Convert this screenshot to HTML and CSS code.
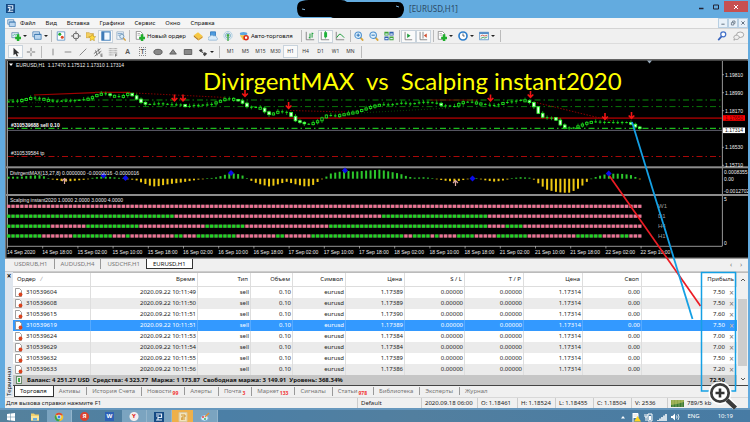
FILE: index.html
```html
<!DOCTYPE html>
<html lang="ru">
<head>
<meta charset="utf-8">
<meta name="viewport" content="width=device-width, initial-scale=1">
<title>[EURUSD,H1]</title>
<link rel="stylesheet" href="styles.css">
</head>
<body>
<svg class="defs" aria-hidden="true">
  <symbol id="newchart" viewBox="0 0 12 12"><path d="M1 2h8v6H1z" fill="#dfeaf5" stroke="#6b8fb3"/><path d="M2 6l2-2 2 1 2-2" fill="none" stroke="#4b8"/><path d="M7 4h3v3h2v3h-2v2H7v-2H5V7h2z" fill="#1fae2b"/></symbol>
  <symbol id="profiles" viewBox="0 0 12 12"><path d="M1 1h8v6H1z" fill="#d7e8f8" stroke="#4f86b8"/><path d="M3 4h8v6H3z" fill="#b9d6f0" stroke="#4f86b8"/><path d="M3 4h8" stroke="#2f6ea8"/></symbol>
  <symbol id="market" viewBox="0 0 12 12"><path d="M1.500 1h9v10h-9z" fill="#fff" stroke="#5d92c4"/><circle cx="4.500" cy="4" r="1.800" fill="#1faa33"/><circle cx="7.500" cy="7.500" r="1.800" fill="#dc4b28"/></symbol>
  <symbol id="target" viewBox="0 0 12 12"><circle cx="6" cy="6" r="3.500" fill="none" stroke="#666" stroke-width="1.200"/><path d="M6 0v4M6 8v4M0 6h4M8 6h4" stroke="#666"/></symbol>
  <symbol id="starfolder" viewBox="0 0 12 12"><path d="M0 2h4l1 1h4v5H0z" fill="#f3cf62" stroke="#c4993b" stroke-width=".7"/><path d="M7.500 4l1.300 2.500 2.900.3-2.100 2 .5 2.900-2.600-1.400-2.600 1.400.5-2.900-2.100-2 2.900-.3z" fill="#ffd93c" stroke="#b98f1c" stroke-width=".6"/></symbol>
  <symbol id="panel" viewBox="0 0 12 12"><path d="M1 1h10v10H1z" fill="#f2f8fe" stroke="#4c87c0" stroke-width="1.300"/><path d="M1 1h3v10H1z" fill="#3f7ab6"/></symbol>
  <symbol id="tester" viewBox="0 0 12 12"><path d="M1 1h8v9H1z" fill="#eef4fa" stroke="#9fb3c8"/><path d="M2 3h6M2 5h3" stroke="#77a0c6"/><circle cx="7" cy="6.500" r="2.500" fill="#d9ecfa" stroke="#6a8fae"/><path d="M9 8.500l2.500 3" stroke="#d39d34" stroke-width="1.600"/></symbol>
  <symbol id="order" viewBox="0 0 12 12"><path d="M1.500.5h5l2.500 2.500v7H1.500z" fill="#fff" stroke="#888"/><path d="M3 3h3M3 5h4" stroke="#aaa"/><path d="M7 4h3v3h2v3h-2v2H7v-2H5V7h2z" fill="#1fae2b"/></symbol>
  <symbol id="gold" viewBox="0 0 12 12"><path d="M1 5l5-3.500L11.500 6 6.500 9.500z" fill="#f7c843"/><path d="M1 5v2l5.500 4.500v-2z" fill="#b87a14"/><path d="M6.500 9.500L11.500 6v2l-5 3.500z" fill="#d89a24"/></symbol>
  <symbol id="cloud" viewBox="0 0 12 12"><path d="M3 1h6v5H3z" fill="#4c9be0" stroke="#2f78bd"/><path d="M2 11a2 2 0 010-4 3 3 0 015-1 2.500 2.500 0 013.500 2A1.600 1.600 0 0110 11z" fill="#d9ecfb" stroke="#7fa9cd" stroke-width=".8"/></symbol>
  <symbol id="signal" viewBox="0 0 12 12"><circle cx="6" cy="5.500" r="5" fill="none" stroke="#b2d2e4" stroke-width="1.200"/><circle cx="6" cy="5.500" r="3" fill="none" stroke="#79b0cc" stroke-width="1.200"/><circle cx="6" cy="5" r="1.500" fill="#3fa945"/><path d="M6 5v7" stroke="#3fa945" stroke-width="1.600"/></symbol>
  <symbol id="auto" viewBox="0 0 12 12"><ellipse cx="5.500" cy="3.200" rx="4.500" ry="2" fill="#5ba5df"/><path d="M1 5h9l-1 5-4 1z" fill="#f1c443"/><circle cx="8.500" cy="8" r="3.300" fill="#d92a1c"/><path d="M7.200 6.700h2.600v2.600H7.200z" fill="#fff"/></symbol>
  <symbol id="bars" viewBox="0 0 12 12"><path d="M1.500 1v9.500H11" fill="none" stroke="#777"/><path d="M6 3v6M4.500 8H6M8.500 2v6M8.500 3H10" fill="none" stroke="#1d9d3a" stroke-width="1.200"/></symbol>
  <symbol id="candle" viewBox="0 0 12 12"><path d="M1.500 1v9.500H11" fill="none" stroke="#777"/><path d="M6.500 0v9" stroke="#1d9d3a"/><path d="M5 1.500h3.500v6H5z" fill="#1db33a"/></symbol>
  <symbol id="line" viewBox="0 0 12 12"><path d="M1.500 1v9.500H11" fill="none" stroke="#777"/><path d="M2 8l3-4 2 0 4 4" fill="none" stroke="#1d9d3a" stroke-width="1.200"/></symbol>
  <symbol id="zoomin" viewBox="0 0 12 12"><path d="M7.500 7.500l3.500 4" stroke="#d9a63b" stroke-width="2.200"/><circle cx="5" cy="5" r="3.900" fill="#ddf0fc" stroke="#4b8fce" stroke-width="1.300"/><path d="M5 3v4M3 5h4" stroke="#2f74b8" stroke-width="1.200"/></symbol>
  <symbol id="zoomout" viewBox="0 0 12 12"><path d="M7.500 7.500l3.500 4" stroke="#d9a63b" stroke-width="2.200"/><circle cx="5" cy="5" r="3.900" fill="#ddf0fc" stroke="#4b8fce" stroke-width="1.300"/><path d="M3 5h4" stroke="#2f74b8" stroke-width="1.200"/></symbol>
  <symbol id="tile" viewBox="0 0 12 12"><path d="M.5 1h5v4.500h-5zM6.500 6.500h5V11h-5z" fill="#3fa33b"/><path d="M6.500 1h5v4.500h-5zM.5 6.500h5V11h-5z" fill="#2e5fae"/><path d="M1.500 3h3v1.500h-3zM7.500 3h3v1.500h-3zM1.500 8.500h3V10h-3zM7.500 8.500h3V10h-3z" fill="#dfeefb"/></symbol>
  <symbol id="scroll" viewBox="0 0 12 12"><path d="M2.500 1v9.500H11" fill="none" stroke="#777"/><path d="M5 3l4 2.700L5 8.500z" fill="#1d9d3a"/></symbol>
  <symbol id="shift" viewBox="0 0 12 12"><path d="M2.500 1v9.500H11M6 1v8" fill="none" stroke="#777"/><path d="M10.500 3L7 5.500l3.500 2.500z" fill="#d14b2b"/></symbol>
  <symbol id="clock" viewBox="0 0 12 12"><circle cx="6" cy="6" r="4.800" fill="#fff" stroke="#2e7ecb" stroke-width="2"/><path d="M6 3v3h2" fill="none" stroke="#345"/></symbol>
  <symbol id="template" viewBox="0 0 12 12"><path d="M.5 1.500h11v9H.5z" fill="#eaf4fd" stroke="#5b93c8"/><path d="M.5 2.500h11" stroke="#4785c2" stroke-width="2"/><path d="M2 6l2-1 3 1 3-1" fill="none" stroke="#d2553c"/><path d="M2 9l3-1.500 2 1 3-1.500" fill="none" stroke="#3b9e4a"/></symbol>
  <symbol id="search" viewBox="0 0 12 12"><circle cx="7.500" cy="4" r="3" fill="#fff" stroke="#4271c9" stroke-width="1.500"/><path d="M5.500 6.500L1.500 11" stroke="#3663bd" stroke-width="2"/></symbol>
  <symbol id="chat" viewBox="0 0 14 12"><ellipse cx="9" cy="4.500" rx="4.300" ry="3.300" fill="#f5f5f5" stroke="#999"/><path d="M4.500 5a3.200 2.600 0 11-1 5L1.500 11l.5-2A3 2.500 0 014.500 5z" fill="#eee" stroke="#999"/></symbol>
  <symbol id="cursor" viewBox="0 0 12 12"><path d="M3 1v9l2.300-2L7 11.500l1.500-.8L7 7.500h3z" fill="#333"/></symbol>
  <symbol id="cross" viewBox="0 0 12 12"><path d="M6 1v4M6 7v4M1 6h4M7 6h4" stroke="#666"/></symbol>
  <symbol id="vline" viewBox="0 0 12 12"><path d="M6 2v8" stroke="#777"/></symbol>
  <symbol id="hline" viewBox="0 0 12 12"><path d="M2 6h8" stroke="#777"/></symbol>
  <symbol id="trend" viewBox="0 0 12 12"><path d="M2 10l8-8" stroke="#777"/></symbol>
  <symbol id="channel" viewBox="0 0 12 12"><path d="M1 8l8-6M2 11l8-6M3 4l2 6M6 2l2 6" stroke="#666"/><path d="M11.500 8.500h-2v3h2M9.500 10h2" fill="none" stroke="#555" stroke-width=".7"/></symbol>
  <symbol id="fib" viewBox="0 0 12 12"><path d="M1 2h10M1 4.500h10M1 7h10M1 9.500h6" stroke="#888" stroke-dasharray="1 .5"/><path d="M9 11.500V8.500h2M9 10h2" fill="none" stroke="#555" stroke-width=".7"/></symbol>
  <symbol id="ellipse" viewBox="0 0 12 12"><ellipse cx="6" cy="6" rx="5" ry="3.200" fill="#888" stroke="#555"/></symbol>
  <symbol id="tri" viewBox="0 0 12 12"><path d="M6 3l4 5.500H2z" fill="#888" stroke="#555"/></symbol>
  <symbol id="rect" viewBox="0 0 12 12"><path d="M1.500 3h9v6h-9z" fill="#888" stroke="#555"/></symbol>
  <symbol id="arrows" viewBox="0 0 12 12"><path d="M1 4l3-2 2 3-3 1zM6 9l2-3 3 2-3 3z" fill="#444"/><path d="M3 5l6 4" stroke="#444"/></symbol>
  <symbol id="doc" viewBox="0 0 8 9"><path d="M.5.5h4l2 2v6h-6z" fill="#fff" stroke="#888" stroke-width=".8"/><circle cx="5.500" cy="6.500" r="1.900" fill="#d9431e"/></symbol>
  <symbol id="mt" viewBox="0 0 10 10"><path d="M0 0h10v10H0z" fill="#154a84"/><path d="M2 2h5.500v3.500H4V8M2 4h3M2 8h6" fill="none" stroke="#e3eef9" stroke-width="1.200"/></symbol>
</svg>
<div class="desktop">
  <div class="window">
    <header class="titlebar">
      <svg class="applogo"><use href="#mt"/></svg>
      <div class="caption">
        <svg class="redaction" viewBox="0 0 108 18"><path d="M5 1Q0 2 0 8Q0 17 6 17H34Q36 18.500 42 18H100Q106 17 107 10Q107 2 101 2H50Q48 0 44 0H12Q8 0 5 1z"/><path d="M5 9l3 .7M99 6l3 1" stroke="#7fb4dc"/></svg>
        <h1>[EURUSD,H1]</h1>
      </div>
      <div class="winbtns">
        <button aria-label="Свернуть"><svg viewBox="0 0 10 8"><path d="M3 5.500h4.500" stroke="#223" stroke-width="1.500"/></svg></button>
        <button aria-label="Развернуть"><svg viewBox="0 0 10 8"><path d="M2.500 2h5v4h-5z" fill="none" stroke="#223"/></svg></button>
        <button class="close" aria-label="Закрыть"><svg viewBox="0 0 10 8"><path d="M3 2l4 4M7 2L3 6" stroke="#fff"/></svg></button>
      </div>
    </header>
    <main class="client">
      <nav class="menu">
        <svg class="menuicon"><use href="#profiles"/></svg>
        <a href="#f">Файл</a><a href="#v">Вид</a><a href="#i">Вставка</a><a href="#g">Графики</a><a href="#s">Сервис</a><a href="#w">Окно</a><a href="#h">Справка</a>
        <div class="mdi">
          <button aria-label="Свернуть окно"><svg viewBox="0 0 10 8"><path d="M3 5.500h4" stroke="#456"/></svg></button>
          <button aria-label="Восстановить"><svg viewBox="0 0 10 8"><path d="M3 3.500h3v3H3zM4.500 3V1.500h3v3H6.500" fill="none" stroke="#456" stroke-width=".8"/></svg></button>
          <button aria-label="Закрыть окно"><svg viewBox="0 0 10 8"><path d="M3 2l4 4M7 2L3 6" stroke="#456"/></svg></button>
        </div>
      </nav>
      <div class="toolbar">
        <button class="drop" aria-label="Новый график"><svg><use href="#newchart"/></svg></button>
        <button class="drop" aria-label="Профили"><svg><use href="#profiles"/></svg></button>
        <i class="sep"></i>
        <button aria-label="Обзор рынка"><svg><use href="#market"/></svg></button>
        <button aria-label="Окно данных"><svg><use href="#target"/></svg></button>
        <button aria-label="Навигатор"><svg><use href="#starfolder"/></svg></button>
        <button class="on" aria-label="Терминал"><svg><use href="#panel"/></svg></button>
        <button aria-label="Тестер"><svg><use href="#tester"/></svg></button>
        <i class="sep"></i>
        <button class="wide"><svg><use href="#order"/></svg>Новый ордер</button>
        <button aria-label="MetaEditor"><svg><use href="#gold"/></svg></button>
        <button aria-label="Облако"><svg><use href="#cloud"/></svg></button>
        <button aria-label="Сигналы"><svg><use href="#signal"/></svg></button>
        <button class="wide"><svg><use href="#auto"/></svg>Авто-торговля</button>
        <i class="sep far"></i>
        <button aria-label="Бары"><svg><use href="#bars"/></svg></button>
        <button class="on" aria-label="Свечи"><svg><use href="#candle"/></svg></button>
        <button aria-label="Линия"><svg><use href="#line"/></svg></button>
        <i class="sep"></i>
        <button aria-label="Увеличить"><svg><use href="#zoomin"/></svg></button>
        <button aria-label="Уменьшить"><svg><use href="#zoomout"/></svg></button>
        <button aria-label="Окна мозаикой"><svg><use href="#tile"/></svg></button>
        <i class="sep"></i>
        <button class="on" aria-label="Автопрокрутка"><svg><use href="#scroll"/></svg></button>
        <button class="on" aria-label="Сдвиг графика"><svg><use href="#shift"/></svg></button>
        <i class="sep"></i>
        <button class="drop" aria-label="Индикаторы"><svg><use href="#order"/></svg></button>
        <button class="drop" aria-label="Периоды"><svg><use href="#clock"/></svg></button>
        <button class="drop" aria-label="Шаблоны"><svg><use href="#template"/></svg></button>
        <i class="sep"></i>
        <span class="grow"></span>
        <button aria-label="Поиск"><svg><use href="#search"/></svg></button>
        <button class="chat" aria-label="Сообщения"><svg><use href="#chat"/></svg></button>
      </div>
      <div class="toolbar second">
        <button class="on" aria-label="Курсор"><svg><use href="#cursor"/></svg></button>
        <button aria-label="Перекрестие"><svg><use href="#cross"/></svg></button>
        <i class="sep"></i>
        <button aria-label="Вертикальная линия"><svg><use href="#vline"/></svg></button>
        <button aria-label="Горизонтальная линия"><svg><use href="#hline"/></svg></button>
        <button aria-label="Трендовая линия"><svg><use href="#trend"/></svg></button>
        <button aria-label="Канал"><svg><use href="#channel"/></svg></button>
        <button aria-label="Фибоначчи"><svg><use href="#fib"/></svg></button>
        <button class="letter">A</button>
        <button class="letter"><span class="boxed">T</span></button>
        <button aria-label="Эллипс"><svg><use href="#ellipse"/></svg></button>
        <button aria-label="Треугольник"><svg><use href="#tri"/></svg></button>
        <button aria-label="Прямоугольник"><svg><use href="#rect"/></svg></button>
        <button class="drop" aria-label="Стрелки"><svg><use href="#arrows"/></svg></button>
        <i class="sep"></i>
        <button>M1</button><button>M5</button><button>M15</button><button>M30</button><button class="on">H1</button><button>H4</button><button>D1</button><button>W1</button><button>MN</button>
        <i class="sep"></i>
      </div>
      <svg class="chart" id="chart" viewBox="5 59 743 200" role="img" aria-label="EURUSD,H1"></svg>
      <nav class="charttabs">
        <a href="#c1">USDRUB,H1</a><a href="#c2">AUDUSD,H4</a><a href="#c3">USDCHF,H1</a><a href="#c4" class="active">EURUSD,H1</a>
        <span class="grow"></span><button aria-label="Назад">‹</button><button aria-label="Вперёд">›</button>
      </nav>
      <section class="terminal">
        <div class="gutter"><button aria-label="Закрыть терминал">×</button><span>Терминал</span></div>
        <div class="panel">
          <div class="tablewrap">
            <table>
              <colgroup><col class="c1"><col class="c2"><col class="c3"><col class="c4"><col class="c5"><col class="c6"><col class="c7"><col class="c8"><col class="c9"><col class="c10"><col class="c11"><col class="c12"></colgroup>
              <thead><tr><th>Ордер <em>∕</em></th><th>Время</th><th>Тип</th><th>Объем</th><th>Символ</th><th>Цена</th><th>S / L</th><th>T / P</th><th>Цена</th><th>Своп</th><th class="profit" colspan="2">Прибыль</th></tr></thead>
              <tbody id="orders"></tbody>
              <tfoot><tr><td colspan="10"><i class="plus"></i>Баланс: 4 251.27 USD&nbsp; Средства: 4 323.77&nbsp; Маржа: 1 173.87&nbsp; Свободная маржа: 3 149.91&nbsp; Уровень: 368.34%</td><td>72.50</td><td></td></tr></tfoot>
            </table>
            <div class="scroll"><button aria-label="Вверх"><svg viewBox="0 0 8 8"><path d="M2 5l2-2 2 2" fill="none" stroke="#555"/></svg></button><i></i><button aria-label="Вниз"><svg viewBox="0 0 8 8"><path d="M2 3l2 2 2-2" fill="none" stroke="#555"/></svg></button></div>
          </div>
          <nav class="tabs">
            <a class="active" href="#t1">Торговля</a><a href="#t2">Активы</a><a href="#t3">История Счета</a><a href="#t4">Новости<sub>99</sub></a><a href="#t5">Алерты</a><a href="#t6">Почта<sub>3</sub></a><a href="#t7">Маркет<sub>133</sub></a><a href="#t8">Сигналы</a><a href="#t9">Статьи<sub>978</sub></a><a href="#t10">Библиотека</a><a href="#t11">Эксперты</a><a href="#t12">Журнал</a>
          </nav>
        </div>
      </section>
      <footer class="status">
        <span class="help">Для вызова справки нажмите F1</span><span class="w64">Default</span><span class="w56">2020.09.18 06:00</span><span class="w40">O: 1.18461</span><span class="w38">H: 1.18524</span><span class="w38">L: 1.18455</span><span class="w38">C: 1.18504</span><span class="w36">V: 2536</span><span class="net"><svg viewBox="0 0 13 7"><path d="M0 0h13v7H0z" fill="#3e7a34"/><path d="M0 0h13v2L6 4 0 5z" fill="#93a94a"/><path d="M2 0v7M5 0v7M8 0v7M11 0v7" stroke="#cfdc9c" stroke-width=".4"/></svg>789/5 kb</span>
      </footer>
    </main>
  </div>
  <footer class="taskbar">
    <button aria-label="Пуск"><svg viewBox="0 0 10 10"><path d="M1 2l3.500-.5v3.200H1zM5 1.400L9 1v3.700H5zM1 5.200h3.500v3.200L1 8zM5 5.200h4V9l-4-.5z" fill="#fff"/></svg></button>
    <button aria-label="Проводник"><svg viewBox="0 0 10 10"><path d="M1 1.500h3l1 1h4v6H1z" fill="#f0cf6b"/><path d="M1 4h8v4.500H1z" fill="#f9e49b"/><path d="M3 6h4v2.500H3z" fill="#69aee0"/></svg></button>
    <button class="open" aria-label="Chrome"><svg viewBox="0 0 10 10"><circle cx="5" cy="5" r="4.300" fill="#f2c32c"/><path d="M1.300 2.800A4.300 4.300 0 019 3.300H5z" fill="#de4634"/><path d="M1.300 2.800A4.300 4.300 0 005 9.300L6.500 6 3.500 6z" fill="#37a351"/><circle cx="5" cy="5" r="1.900" fill="#3f83e8" stroke="#fff" stroke-width=".7"/></svg></button>
    <button class="ya">Я</button>
    <button class="word">W</button>
    <button class="open yb">Y</button>
    <button class="open" aria-label="MetaTrader"><svg><use href="#mt"/></svg></button>
    <button class="alert" aria-label="MetaTrader 2"><svg viewBox="0 0 10 10"><path d="M1 .5h8v9H1z" fill="#f3e3ba" stroke="#d8c79f"/><path d="M3 3h4v2H4v3M3 7h4" fill="none" stroke="#d2942a"/></svg></button>
    <button class="open" aria-label="Paint"><svg viewBox="0 0 10 10"><ellipse cx="4.500" cy="6" rx="3.800" ry="3" fill="#d8eaf7" stroke="#6ba2cf" stroke-width=".7"/><circle cx="3" cy="5" r=".9" fill="#d33"/><circle cx="5" cy="7" r=".9" fill="#3a5"/><path d="M5 5l4-4" stroke="#e8902d" stroke-width="1.300"/></svg></button>
    <span class="grow"></span>
    <div class="tray">
      <svg viewBox="0 0 10 10"><path d="M3 6.500l2-2.500 2 2.500z" fill="#fff"/></svg>
      <svg viewBox="0 0 10 10"><path d="M2 1v9M2 1.500h5v4H2" fill="#eee" stroke="#fff"/><path d="M6.500 4L10 9.500H3z" fill="#ffd51f"/></svg>
      <svg viewBox="0 0 10 10"><path d="M4 2h4v7H4zM1 2v3h2V2M2 5v4" fill="none" stroke="#fff"/><path d="M5 4h2v4H5z" fill="#fff"/></svg>
      <svg viewBox="0 0 10 10"><path d="M1 9v-1M3 9V6.500M5 9V5M7 9V3.500M9 9V2" stroke="#fff" stroke-width="1.500"/></svg>
      <svg viewBox="0 0 10 10"><path d="M1 4h1.500L5 1.500v7L2.500 6H1z" fill="#fff"/><path d="M6.500 3.500q1 1.500 0 3M8 2q2 3 0 6" fill="none" stroke="#fff" stroke-width=".8"/></svg>
      <span class="lang">ENG</span><time>10:19</time>
    </div>
  </footer>
  <svg class="overlay" viewBox="0 0 750 422" aria-hidden="true">
    <path d="M609.500 176L700.500 306" stroke="#ec1c24" stroke-width="1.700"/>
    <path d="M632 122L692.500 319" stroke="#14a0e4" stroke-width="1.800"/>
    <path d="M701.500 272.500H735.500V391H701.500z" fill="none" stroke="#14a0e4" stroke-width="1.500"/>
    <path d="M726 398l9 9" stroke="#fff" stroke-width="6"/>
    <circle cx="720" cy="393" r="9" fill="#fff" stroke="#fff" stroke-width="5"/>
    <circle cx="720" cy="393" r="8.700" fill="#fff" stroke="#3b3b3b" stroke-width="2.700"/>
    <path d="M720 388.500v9M715.500 393h9" stroke="#333" stroke-width="2.600"/>
    <path d="M727 400l8.500 8" stroke="#3b3b3b" stroke-width="4.400"/>
  </svg>
</div>
<script src="chart.js"></script>
</body>
</html>
```
FILE: styles.css
```css
* { box-sizing: border-box; }
body { margin: 0; font: 6px/11px "Noto Sans", "Open Sans", sans-serif; color: #111; background: #4a7da6; }
button { font: inherit; color: inherit; border: 0; padding: 0; background: none; }
a { color: inherit; text-decoration: none; }
svg { display: block; }
.defs { width: 0; height: 0; position: absolute; }
.grow { flex: 1; }
.desktop { position: relative; }
.overlay { position: absolute; inset: 0; width: 100%; pointer-events: none; }
.window { background: #63abdf; padding: 0 2px 0 5px; }

.titlebar { display: flex; justify-content: space-between; align-items: flex-start; height: 18px; }
.applogo { width: 9px; height: 9px; margin: 4px 0 0 1px; }
.caption { display: flex; gap: 4px; padding-left: 46px; }
.redaction { width: 108px; height: 18px; }
.caption h1 { margin: 0; font-size: 8px; line-height: 18px; font-weight: 400; color: #2c4a63; }
.winbtns { display: flex; padding-top: 1px; }
.winbtns button { width: 15px; height: 11px; }
.winbtns .close { width: 24px; background: #c75050; }
.winbtns svg { height: 8px; width: 10px; margin: auto; }

.client { background: #f0f0f0; }
.menu { display: flex; align-items: center; height: 11px; padding-left: 2px; border-bottom: 1px solid #d4d4d4; background: #f5f5f5; font-size: 6px; color: #111; }
.menuicon { width: 9px; height: 9px; margin-right: 4px; }
.menu a { margin-right: 10px; }
.mdi { display: flex; margin-left: auto; }
.mdi button { width: 10px; height: 10px; border: 1px solid #b8cfe2; background: #e8f1f9; }
.mdi svg { width: 8px; height: 8px; }

.toolbar { display: flex; align-items: center; height: 15px; padding-left: 3px; border-bottom: 1px solid #dcdcdc; }
.toolbar button { display: flex; align-items: center; justify-content: center; width: 15px; height: 13px; flex: none; }
.toolbar svg { width: 10px; height: 10px; flex: none; }
.toolbar .on { background: #fafafa; border: 1px solid #c9d3dc; }
.toolbar .drop { width: 21px; gap: 2px; }
.toolbar .drop::after { content: ""; border: 2px solid transparent; border-top-color: #222; border-bottom: 0; }
.toolbar .wide { width: auto; gap: 2px; padding: 0 4px; color: #111; }
.sep { width: 1px; height: 12px; margin: 0 1px; background: #bbb; flex: none; }
.sep.far { margin-left: 4px; }
.far ~ .sep { margin-left: 2px; }
.toolbar .chat { width: 19px; }
.toolbar .chat svg { width: 13px; }
.second { height: 15px; border-bottom: 0; font-size: 5px; color: #333; }
.second .sep { margin: 0 3px; }
.second .letter { font-size: 7px; font-weight: 600; color: #555; }
.boxed { border: 1px dotted #888; line-height: 7px; padding: 0 1px; }

.chart { width: 100%; height: auto; background: #000; font-family: "Liberation Sans", sans-serif; }
.chart .small { font-size: 5px; fill: #eee; }
.chart .note { font-size: 5px; fill: #fff; font-weight: 700; }
.chart .dim { font-size: 6px; fill: #999; }
.chart .headline { font-family: Lato, "Open Sans", sans-serif; font-size: 24px; fill: #ffff00; }

.charttabs { display: flex; height: 13px; padding: 0 2px 2px 3px; color: #777; border-bottom: 1px solid #ccc; }
.charttabs a { padding: 0 6px; height: 10px; line-height: 10px; }
.charttabs a + a { border-left: 1px solid #999; }
.charttabs .active { background: #fff; color: #111; border: 1px solid #333; border-top: 0; }
.charttabs button { width: 10px; font-size: 7px; line-height: 9px; }

.terminal { display: flex; }
.gutter { width: 8px; display: flex; flex-direction: column; justify-content: space-between; align-items: center; background: #dfe6ee; }
.gutter button { font-size: 8px; line-height: 7px; font-weight: 700; }
.gutter span { writing-mode: vertical-rl; transform: rotate(180deg); line-height: 8px; }
.panel { flex: 1; min-width: 0; border-top: 1px solid #bbb; }
.tablewrap { display: flex; }
table { flex: 1; table-layout: fixed; border-spacing: 0; width: 100%; background: #fff; color: #222; }
.c1 { width: 78px; } .c2 { width: 107px; } .c3 { width: 53px; } .c4 { width: 42px; } .c5 { width: 53px; }
.c6 { width: 59px; } .c7 { width: 60px; } .c8 { width: 59px; } .c9 { width: 59px; } .c10 { width: 59px; } .c12 { width: 11px; }
th, td { padding: 0 1px; text-align: right; border-right: 1px solid #dedede; height: 11px; line-height: 11px; white-space: nowrap; }
th { height: 13px; line-height: 13px; font-weight: 400; padding-right: 2px; border-bottom: 1px solid #ddd; }
th:first-child { text-align: left; padding-left: 4px; }
th em { color: #999; margin-left: 3px; }
.profit { padding-right: 2px; }
td:first-child { text-align: left; }
td:nth-child(11), td:nth-child(12) { border-right: 0; }
td:nth-child(12) { color: #777; text-align: center; font-size: 8px; }
td svg { display: inline-block; width: 8px; height: 9px; margin: 0 3px 0 1px; vertical-align: middle; }
tbody tr:nth-child(even) { background: #ebebeb; }
tbody .sel, tbody tr.sel:nth-child(even) { background: #3399ff; color: #fff; }
tbody .sel td { border-color: #55aaff; }
tbody .sel td:nth-child(12) { color: #d9b9a0; }
tfoot td { height: 10px; line-height: 10px; background: #c6c6c6; border: 0; font-weight: 700; color: #111; }
.plus { display: inline-block; width: 6px; height: 8px; margin: 0 5px 0 2px; vertical-align: middle; border: 1px solid #6a8a6a; background: #3fb34a; outline: 1px solid #eee; outline-offset: -2px; }
.scroll { width: 11px; display: flex; flex-direction: column; background: #f0f0f0; }
.scroll button { height: 13px; }
.scroll svg { width: 8px; height: 8px; margin: auto; }
.scroll i { flex: 1; margin: 13px 1px 6px; background: #cdcdcd; }
.tabs { display: flex; align-items: center; height: 11px; padding-left: 1px; color: #777; border-top: 1px solid #444; }
.tabs a { padding: 0 6px 0 5px; line-height: 8px; white-space: nowrap; }
.tabs a + a + a { border-left: 1px solid #999; }
.tabs .active { background: #fff; color: #111; border: 1px solid #333; border-top: 0; line-height: 10px; align-self: flex-start; }
.tabs sub { font-size: 5px; line-height: 5px; color: #f03030; font-weight: 700; vertical-align: -2px; margin-left: 1px; }
.status { display: flex; margin-top: 1px; padding-left: 1px; border-top: 1px solid #d8d8d8; line-height: 10px; white-space: nowrap; color: #222; }
.status span { padding-left: 3px; border-left: 1px solid #ccc; }
.status .help { flex: 1; padding-left: 0; border: 0; }
.w64 { width: 64px; } .w56 { width: 56px; } .w40 { width: 40px; } .w38 { width: 38px; } .w36 { width: 36px; }
.net { width: 81px; display: flex; gap: 3px; }
.net svg { width: 13px; height: 7px; margin-top: 2px; }

.taskbar { display: flex; height: 15px; background: linear-gradient(90deg, #55819c, #4b7fa6 30%, #527f9f 55%, #477ba4); border-top: 2px solid #6697bd; color: #fff; }
.taskbar button { width: 25px; display: flex; align-items: center; justify-content: center; font-weight: 700; }
.taskbar button:first-child { width: 22px; }
.taskbar svg { width: 10px; height: 10px; }
.taskbar .open { background: #7ba4c0; border-right: 1px solid #94b5cc; }
.taskbar .alert { background: #eeb04a; width: 21px; }
.taskbar .ya { background: radial-gradient(circle, #d8432f 4px, transparent 5px); }
.taskbar .word { background: linear-gradient(#2f62b5, #2f62b5) center / 9px 9px no-repeat; }
.taskbar .yb { background: radial-gradient(circle, #f4eded 4px, #7ba4c0 5px); color: #e02020; }
.tray { display: flex; align-items: center; gap: 3px; padding-right: 17px; }
.tray .lang { margin-left: 4px; }
.tray time { margin-left: 15px; }
```
FILE: chart.js
```js
const out = [];
const line = (x1, y1, x2, y2, c, w = 1, d = '') => out.push(`<line x1="${x1}" y1="${y1}" x2="${x2}" y2="${y2}" stroke="${c}" stroke-width="${w}" stroke-dasharray="${d}"/>`);
const rect = (x, y, w, h, c, s = 'none') => out.push(`<rect x="${x}" y="${y}" width="${w}" height="${h}" fill="${c}" stroke="${s}" stroke-width=".9"/>`);
const text = (x, y, t, c = 'small', extra = '') => out.push(`<text xml:space="preserve" x="${x}" y="${y}" class="${c}" ${extra}>${t}</text>`);
const COUNT = 144, STEP = 4.414, FIRST = 8.6;
const xAt = i => FIRST + i * STEP;

// Linear interpolation over a flat list of x,y pairs
function at(p, x) {
  if (x <= p[0]) return p[1];
  for (let k = 2; k < p.length; k += 2)
    if (x <= p[k]) return p[k - 1] + (p[k + 1] - p[k - 1]) * (x - p[k - 2]) / (p[k] - p[k - 2]);
  return p[p.length - 1];
}

// Window frames and separators
rect(5, 59, 743, 2, '#777');
rect(5, 59, 1.5, 200, '#777');
rect(6.5, 59.8, 741, .8, '#222');
line(7.5, 61, 7.5, 246, '#bbb', .8);
line(722.4, 61, 722.4, 246, '#bbb', .8);
rect(6, 166.3, 742, 2, '#8c8c8c');
rect(6, 194, 742, 2, '#8c8c8c');
line(7, 246.3, 722.4, 246.3, '#bbb', .8);
rect(5, 257.6, 743, 1.4, '#999');

// Price levels
line(8, 100, 722, 100, '#075f07', 1.4, '6 3 1.5 3');
line(8, 106.6, 722, 106.6, '#0a850a', .9, '6 3 1.5 3');
line(8, 118.2, 722, 118.2, '#850000', 1.7);
line(8, 128.3, 722, 128.3, '#1dbb1d', 1.2, '6 3 1.5 3');
line(8, 130.4, 722, 130.4, '#777788', .8);
line(8, 156.5, 722, 156.5, '#a80808', 1, '6 3 1.5 3');
line(34, 95, 95, 92.6, '#a00000', 1.1);
line(95, 92.2, 130, 92.4, '#a00000', 1.1);
line(130, 92.8, 226, 97.5, '#8d0000', .9, '1.5 1.5');
line(290, 110.5, 345, 112, '#8d0000', .9, '1.5 1.5');
line(430, 100, 478, 100, '#6d0000', 1);
line(534, 102, 612, 121, '#9d0000', .9, '1.5 1.5');
line(340, 114, 450, 108, '#075f07', .8, '1 2');
line(20, 103, 70, 102, '#064f06', .8, '1 2');

// Candles follow the price path
const price = [7,101.500,17,101.300,21,100.300,27,98.800,34,97.300,43,98.500,51,100.700,67,100.700,80,100,88,99,94,97,100,94,105,93,113,95.500,121,96.800,126,95.300,130.600,93,136,97,143.600,102.700,148,104.300,161,103.300,170,104.300,183,104.600,187,106.700,197,105,213,104.300,218,102,227,98.700,232,98.300,240,100.700,245,103.300,249,106.700,258,107.300,263,108.300,267,112,271,114.700,280,111.300,288.600,112.300,293,116,297.500,120.700,306,123.700,310.700,124.300,319,121.300,324,118,328,115,337,115.700,350,113,359,111.300,372,106.700,380,104.300,393,104.500,404,102.700,412,104,425,101.700,434,102.700,438,102.700,442,105.300,451,105.700,455,107,460,104,464,101.700,473,101.700,482,103.700,491,105.300,500,104.700,504,102.700,517,101,522,99.700,530,101.300,534.700,104.700,539,111.300,543,116.700,548,118,556,117.500,561,123.700,565.500,127.300,574,128.300,582.500,124.900,591.600,121.300,605,122,618,122.300,627,122,631.500,123.300,636,126,640,128.500];
for (let i = 0; i < COUNT; i++) {
  const x = xAt(i);
  const open = at(price, x - 2.2), close = at(price, x + 2.2);
  const top = Math.min(open, close), h = Math.abs(close - open);
  line(x, top - .7 - (i * 7 % 4) * .5, x, top + h + .8 + (i * 5 % 4) * .5, '#10c010', .8);
  if (close - open > 1.3) rect(x - 1.3, top, 2.6, h, '#f4fff4', '#3f3');
  else if (h > .8) rect(x - 1.2, top, 2.4, Math.max(h, 2), '#000', '#1ee01e');
  else rect(x - 1.3, top, 2.6, 1, '#1ee01e');
}
[[174.500,98],[183,98],[245,93.500],[288.600,105.500],[490.500,98],[530.500,94.500],[605,116.500],[631.500,115.500]].forEach(([x, y]) =>
  out.push(`<path d="M${x} ${y - 3.500}V${y + 2}M${x - 2.800} ${y}L${x} ${y + 2.800}L${x + 2.800} ${y}" fill="none" stroke="#f01414" stroke-width="1.600"/>`));

// Oscillator histogram
const hist = [7,2,20,2,30,3,40,3.500,47,1.500,50,-.5,58,-1.500,64,-3,70,-2.500,85,-1,90,.5,100,2,108,2,120,.8,128,-.4,136,-1.500,142,-4,150,-7,156,-8,165,-6,180,-4,195,-1.500,205,.3,215,1,222,3,230,5.500,237,5,243,3,248,-.3,253,-3,258,-5,270,-8,280,-5,287,-3,293,-5,306,-8,312,-7,318,-3,321,-.5,325,1,330,5,335,6,345,8,355,7,365,8,380,9,390,7,400,5,408,2,415,1,425,1.500,432,.5,437,-.4,445,-2,455,-3,465,-1,475,1,480,-.5,487,-2,495,-3,505,-1.500,512,.5,520,1.500,530,1,534,-1,540,-6,547,-11,555,-13,563,-14,570,-14,578,-10,585,-5,589,-1,592,.5,600,3,608,5,620,5,630,4,636,1.500,640,-.5];
for (let i = 0; i < COUNT; i++) {
  const x = xAt(i), v = at(hist, x);
  rect(x - 1, v > 0 ? 178.700 - v : 178.700, 2, Math.max(Math.abs(v), .6), v > 0 ? '#2cc62c' : '#edc711');
}
[[103.500,175.500],[125.500,178],[231,173],[345,170.500],[472.500,178.500],[608.700,173.500]].forEach(([x, y]) =>
  out.push(`<path d="M${x - 3} ${y}L${x} ${y - 3}L${x + 3} ${y}L${x} ${y + 3}z" fill="#0b0bea"/>`));
[[64.500,181],[455.500,183]].forEach(([x, y]) =>
  out.push(`<path d="M${x} ${y + 3}V${y - 2}M${x - 2.500} ${y}L${x} ${y - 2.500}L${x + 2.500} ${y}" fill="none" stroke="#d7a4a0" stroke-width="1.200"/>`));

// Signal rows: x positions where the colour flips, starting with green
const rows = [
  [206.300, [0]],
  [216.200, [172, 383, 488]],
  [226.200, [49, 84, 137, 207, 243, 330, 488, 506, 523]],
  [236, [40, 71, 111, 124, 132, 176, 181, 194, 234, 277.500, 286, 312, 405, 413, 432, 435, 440, 458, 475, 498, 528, 576, 602, 620, 629]]
];
for (const [y, flips] of rows) {
  rect(8, y - 1.6, 633.500, 3.200, '#3c3030');
  for (let i = 0; i < COUNT; i++) {
    const x = xAt(i);
    const pink = flips.filter(f => f < x).length % 2;
    rect(x - 1.6, y - 1.6, 3.2, 3.2, pink ? '#ea7394' : '#22d426');
  }
}

// Labels
out.push('<path d="M9 63.500h4l-2 2.500z" fill="#fff"/><path d="M647 60.500h5l-2.500 3z" fill="#9ab"/>');
text(16, 66.5, 'EURUSD,H1  1.17470 1.17512 1.17310 1.17314');
text(203, 90, 'DivirgentMAX  vs  Scalping instant2020', 'headline');
text(11, 127, '#310539688 sell 0.10', 'note');
text(11, 155, '#310539584 tp');
text(10, 174.500, 'DivirgentMAX(13,27,8) 0.0000000 -0.0000016 -0.0000016');
text(10, 202, 'Scalping instant2020 1.0000 2.0000 3.0000 4.0000');
['W1', 'D1', 'H4', 'H1'].forEach((t, i) => text(658, 207.500 + i * 10, t, 'dim'));
[['1.19810', 76.500], ['1.18990', 94.500], ['1.18170', 112.500], ['1.16530', 149], ['1.15710', 167], ['0.0008355', 173.500], ['0.00', 180.500], ['-0.0012702', 192.500], ['5', 201], ['0', 245]].forEach(([t, y], i) =>
  text(i < 5 ? 725 : 724, y, t));
[74.700, 92.700, 110.700, 147.300, 165.300].forEach(y => line(722, y, 724, y, '#bbb', .7));
rect(723, 115.200, 22, 5.6, '#ff0000');
text(725, 119.800, '1.17650', 'small', 'style="fill:#500"');
rect(723, 127.500, 22, 5.6, '#fff');
text(725, 132, '1.17314', 'small', 'style="fill:#111"');
['14 Sep 2020', '14 Sep 18:00', '15 Sep 02:00', '15 Sep 10:00', '15 Sep 18:00', '16 Sep 02:00', '16 Sep 10:00', '16 Sep 18:00', '17 Sep 02:00', '17 Sep 10:00', '17 Sep 18:00', '18 Sep 02:00', '18 Sep 10:00', '18 Sep 18:00', '21 Sep 02:00', '21 Sep 10:00', '21 Sep 18:00', '22 Sep 02:00', '22 Sep 10:00'].forEach((t, i) => {
  const x = 7 + i * 35.2;
  line(x + .5, 246, x + .5, 248.500, '#bbb', .7);
  text(x, 253.500, t);
});
document.getElementById('chart').innerHTML = out.join('');

// Open orders
const orders = [
  ['310539604', '49', '1.17389', '7.50'], ['310539608', '50', '1.17389', '7.50'], ['310539615', '51', '1.17390', '7.60'], ['310539619', '51', '1.17389', '7.50'],
  ['310539624', '53', '1.17384', '7.00'], ['310539629', '54', '1.17384', '7.00'], ['310539632', '55', '1.17389', '7.50'], ['310539633', '56', '1.17386', '7.20']
];
document.getElementById('orders').innerHTML = orders.map(([id, s, p, profit], i) =>
  `<tr class="${i === 3 ? 'sel' : ''}"><td><svg><use href="#doc"/></svg>${id}</td><td>2020.09.22 10:11:${s}</td><td>sell</td><td>0.10</td><td>eurusd</td><td>${p}</td><td>0.00000</td><td>0.00000</td><td>1.17314</td><td>0.00</td><td>${profit}</td><td>×</td></tr>`).join('');
```
